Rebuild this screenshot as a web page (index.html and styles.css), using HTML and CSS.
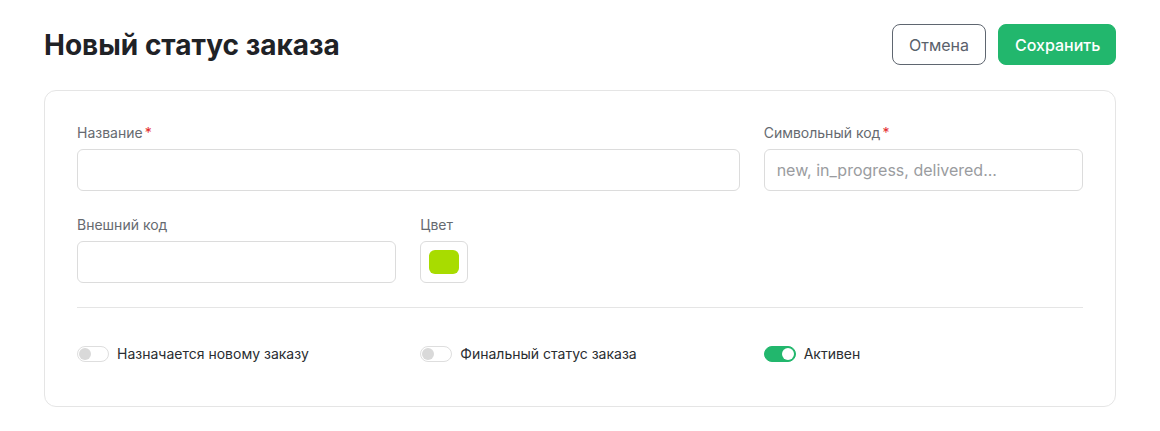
FILE: index.html
```html
<!DOCTYPE html>
<html lang="ru">
<head>
<meta charset="utf-8">
<title>Новый статус заказа</title>
<link rel="stylesheet" href="styles.css">
</head>
<body>
<div class="page">
  <header class="header">
    <h1 class="title">Новый статус заказа</h1>
    <div class="actions">
      <button class="btn btn-cancel" type="button">Отмена</button>
      <button class="btn btn-save" type="button">Сохранить</button>
    </div>
  </header>
  <section class="card">
    <div class="grid">
      <div class="field span2">
        <label class="label">Название<span class="req">*</span></label>
        <input class="input" type="text">
      </div>
      <div class="field">
        <label class="label">Символьный код<span class="req">*</span></label>
        <input class="input" type="text" placeholder="new, in_progress, delivered...">
      </div>
      <div class="field">
        <label class="label">Внешний код</label>
        <input class="input" type="text">
      </div>
      <div class="field">
        <label class="label">Цвет</label>
        <div class="color-box"><span class="swatch"></span></div>
      </div>
    </div>
    <hr class="divider">
    <div class="toggles">
      <label class="toggle-item"><span class="toggle"><span class="knob"></span></span><span class="toggle-text">Назначается новому заказу</span></label>
      <label class="toggle-item"><span class="toggle"><span class="knob"></span></span><span class="toggle-text">Финальный статус заказа</span></label>
      <label class="toggle-item"><span class="toggle on"><span class="knob"></span></span><span class="toggle-text">Активен</span></label>
    </div>
  </section>
</div>
</body>
</html>
```
FILE: styles.css
```css
* { box-sizing: border-box; }
html, body { margin: 0; padding: 0; background: #ffffff; }
body {
  font-family: Inter, "Noto Sans", "Liberation Sans", sans-serif;
  color: #1f2226;
}
.page {
  padding: 24px 44px 0 44px;
}
.header {
  display: flex;
  align-items: center;
  justify-content: space-between;
  height: 41px;
}
.title {
  margin: 0;
  font-size: 28px;
  font-weight: 700;
  color: #1f2226;
}
.actions {
  display: flex;
  gap: 12px;
}
.btn {
  height: 41px;
  border-radius: 8px;
  font-family: inherit;
  font-size: 16px;
  padding: 0 16px;
  cursor: pointer;
}
.btn-cancel {
  width: 94px;
  background: #fff;
  border: 1px solid #5f6670;
  color: #5a616b;
  font-weight: 400;
}
.btn-save {
  width: 118px;
  background: #22b76d;
  border: 1px solid #22b76d;
  color: #ffffff;
  font-weight: 500;
}
.card {
  margin-top: 25px;
  border: 1px solid #e5e5e5;
  border-radius: 12px;
  padding: 32px 32px 36px 32px;
}
.grid {
  display: grid;
  grid-template-columns: repeat(3, 1fr);
  column-gap: 24px;
  row-gap: 24px;
}
.span2 { grid-column: span 2; }
.field {
  display: flex;
  flex-direction: column;
  align-items: flex-start;
}
.label {
  font-size: 14px;
  line-height: 20px;
  color: #666a70;
  margin-bottom: 6px;
}
.req {
  color: #e32b2b;
  margin-left: 2px;
}
.input {
  width: 100%;
  height: 42px;
  border: 1px solid #dcdcdc;
  border-radius: 6px;
  padding: 0 12px;
  font-family: inherit;
  font-size: 16px;
  color: #222;
  background: #fff;
  outline: none;
}
.input::placeholder { color: #9a9ca0; }
.color-box {
  width: 48px;
  height: 42px;
  border: 1px solid #dcdcdc;
  border-radius: 6px;
  display: flex;
  align-items: center;
  justify-content: center;
}
.swatch {
  width: 30px;
  height: 24px;
  border-radius: 6px;
  background: #a8dc00;
}
.divider {
  margin: 24px 0 0 0;
  border: 0;
  border-top: 1px solid #e5e5e5;
}
.toggles {
  margin-top: 30px;
  display: grid;
  grid-template-columns: repeat(3, 1fr);
  column-gap: 24px;
  height: 32px;
  align-items: center;
}
.toggle-item {
  display: flex;
  align-items: center;
  gap: 8px;
}
.toggle {
  position: relative;
  width: 32px;
  height: 16px;
  border-radius: 8px;
  border: 1px solid #dedede;
  background: #fff;
  flex: none;
}
.toggle .knob {
  position: absolute;
  top: 1px;
  left: 1px;
  width: 12px;
  height: 12px;
  border-radius: 50%;
  background: #d9d9d9;
}
.toggle.on {
  background: #22b76d;
  border-color: #22b76d;
}
.toggle.on .knob {
  left: auto;
  right: 1px;
  background: #fff;
}
.toggle-text {
  font-size: 14px;
  line-height: 20px;
  color: #2a2d31;
}
```
